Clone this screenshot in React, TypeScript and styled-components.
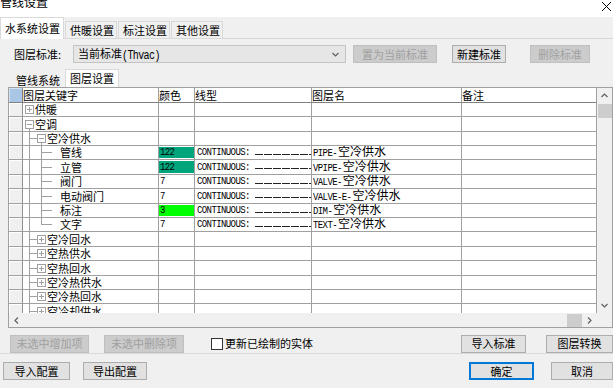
import React from 'react';
import styled, { createGlobalStyle } from 'styled-components';

const cjk = `"Noto Sans CJK SC", "Noto Sans CJK TC", "Liberation Sans", sans-serif`;
const mono = `"Liberation Mono", "DejaVu Sans Mono", monospace`;
const LINE = '#a0a0a0';
const COLS = '14px 136px 36px 117px 150px 135px';

const GlobalStyle = createGlobalStyle`
  html, body { margin: 0; padding: 0; }
  body {
    background: #f0f0f0;
    font-family: ${cjk};
    font-size: 11px;
    line-height: 13px;
    color: #000;
  }
  * { box-sizing: border-box; }
`;

type Kind = 'plus' | 'minus' | 'leaf';

interface TreeRow {
  label: string;
  level: 0 | 1 | 2;
  kind: Kind;
  last?: boolean;
  color?: string;
  swatch?: string;
  layer?: string;
}

const rows: TreeRow[] = [
  { label: '供暖', level: 0, kind: 'plus' },
  { label: '空调', level: 0, kind: 'minus' },
  { label: '空冷供水', level: 1, kind: 'minus' },
  { label: '管线', level: 2, kind: 'leaf', color: '122', swatch: '#00a57c', layer: 'PIPE-' },
  { label: '立管', level: 2, kind: 'leaf', color: '122', swatch: '#00a57c', layer: 'VPIPE-' },
  { label: '阀门', level: 2, kind: 'leaf', color: '7', layer: 'VALVE-' },
  { label: '电动阀门', level: 2, kind: 'leaf', color: '7', layer: 'VALVE-E-' },
  { label: '标注', level: 2, kind: 'leaf', color: '3', swatch: '#00ff00', layer: 'DIM-' },
  { label: '文字', level: 2, kind: 'leaf', last: true, color: '7', layer: 'TEXT-' },
  { label: '空冷回水', level: 1, kind: 'plus' },
  { label: '空热供水', level: 1, kind: 'plus' },
  { label: '空热回水', level: 1, kind: 'plus' },
  { label: '空冷热供水', level: 1, kind: 'plus' },
  { label: '空冷热回水', level: 1, kind: 'plus' },
  { label: '空冷却供水', level: 1, kind: 'plus' },
];

// row lines fall every ~14.4px, so heights alternate 14/15
const rowBottom = (k: number) => Math.round(101.7 + 14.4 * k);
const rowHeight = (k: number) => rowBottom(k + 1) - rowBottom(k);

const Window = styled.div`
  width: 613px;
  height: 388px;
  overflow: hidden;
  background: #f0f0f0;
  display: flex;
  flex-direction: column;
`;

const TitleBar = styled.div`
  height: 17px;
  flex: none;
  background: #fff;
  display: flex;
  justify-content: space-between;
  align-items: flex-start;
  overflow: hidden;
`;

const Title = styled.span`
  font-size: 12px;
  line-height: 14px;
  margin-top: -5px;
`;

const CloseIcon = styled.svg`
  margin: 2px 2px 0 0;
  stroke: #000;
  stroke-width: 1;
`;

const TabStrip = styled.div`
  height: 22px;
  flex: none;
  display: flex;
  align-items: flex-end;
  border-bottom: 1px solid #d9d9d9;
`;

const Tab = styled.div<{ $active?: boolean }>`
  position: relative;
  height: ${p => (p.$active ? 22 : 17)}px;
  margin-bottom: ${p => (p.$active ? -1 : 0)}px;
  margin-right: 1px;
  padding: 0 ${p => (p.$active ? 3 : 2)}px 0 4px;
  display: flex;
  align-items: center;
  background: ${p => (p.$active ? '#fff' : '#f0f0f0')};
  border: 1px solid #d9d9d9;
  border-bottom: none;
  white-space: nowrap;
`;

const Page = styled.div`
  flex: none;
  height: 315px;
  border-bottom: 1px solid #dadada;
  display: flex;
  flex-direction: column;
`;

const StandardRow = styled.div`
  height: 18px;
  margin-top: 6px;
  display: flex;
  align-items: center;
`;

const Label = styled.span`
  margin-left: 14px;
  width: 59px;
  white-space: nowrap;
`;

const Combo = styled.div`
  width: 273px;
  height: 18px;
  border: 1px solid #c4c4c4;
  background: #e6e6e6;
  display: flex;
  align-items: center;
  padding: 0 6px 0 4px;
  white-space: nowrap;
`;

const TextRun = styled.span`
  flex: 1;
  white-space: nowrap;
`;

const LayerName = styled.span`
  display: flex;
  align-items: baseline;
  line-height: 12px;
  white-space: nowrap;
`;

// narrow bitmap-like latin text, stretched upright to match the CAD font
const Mono = styled.span<{ $size?: number; $shift?: number }>`
  display: inline-block;
  font-family: ${mono};
  font-size: ${p => p.$size ?? 9}px;
  letter-spacing: -0.6px;
  padding-right: 1px;
  transform: translateY(${p => p.$shift ?? 0}px) scaleY(1.2);
`;

const Button = styled.button<{ $w: number; $gap?: number; $disabled?: boolean; $default?: boolean }>`
  width: ${p => p.$w}px;
  height: 18px;
  margin-left: ${p => p.$gap ?? 0}px;
  padding: 0;
  flex: none;
  font-family: ${cjk};
  font-size: 11px;
  line-height: 13px;
  color: ${p => (p.$disabled ? '#a0a0a0' : '#000')};
  background: ${p => (p.$disabled ? '#cccccc' : '#e1e1e1')};
  border: 1px solid ${p => (p.$default ? '#0078d7' : p.$disabled ? '#bfbfbf' : '#adadad')};
  box-shadow: ${p => (p.$default ? 'inset 0 0 0 1px #0078d7' : 'none')};
  white-space: nowrap;
`;

const InnerTabs = styled.div`
  height: 24px;
  flex: none;
  display: flex;
  align-items: flex-end;
  padding-left: 12px;
`;

const InnerTab = styled.div<{ $active?: boolean }>`
  height: ${p => (p.$active ? 18 : 14)}px;
  padding: 0 4px 0 ${p => (p.$active ? 4 : 3)}px;
  display: flex;
  align-items: center;
  background: ${p => (p.$active ? '#fff' : '#f0f0f0')};
  border: 1px solid ${p => (p.$active ? '#d9d9d9' : 'transparent')};
  border-bottom: none;
  white-space: nowrap;
`;

const Grid = styled.div`
  margin-left: 8px;
  width: 605px;
  height: 241px;
  flex: none;
  border: 1px solid ${LINE};
  display: grid;
  grid-template-columns: 588px 15px;
  grid-template-rows: 225px 14px;
  background: #fff;
`;

const Viewport = styled.div`
  overflow: hidden;
  background: #fff;
`;

const Row = styled.div<{ $h: number }>`
  display: grid;
  grid-template-columns: ${COLS};
  height: ${p => p.$h}px;
`;

const Cell = styled.div<{ $pad?: number }>`
  border-right: 1px solid ${LINE};
  border-bottom: 1px solid ${LINE};
  display: flex;
  align-items: center;
  padding-left: ${p => p.$pad ?? 0}px;
  overflow: hidden;
  white-space: nowrap;
`;

const HeadCell = styled(Cell)`
  align-items: flex-end;
  border-bottom-color: #808080;
  background: #fff;
`;

const Corner = styled(Cell)`
  background: #a9c6e6;
  border-right-color: #808080;
  border-bottom-color: #808080;
  box-shadow: inset 1px 1px 0 #d4e3f3;
`;

const RowHead = styled(Cell)`
  background: #f0f0f0;
  border-right-color: #909090;
  box-shadow: inset 1px 1px 0 #fff;
`;

const Swatch = styled.div<{ $fill?: string }>`
  flex: 1;
  align-self: stretch;
  margin: 1px 0;
  padding-left: 1px;
  display: flex;
  align-items: center;
  background: ${p => p.$fill ?? 'transparent'};
`;

// linetype preview: a dashed stroke after the name
const DashLine = styled.span`
  flex: none;
  width: 60px;
  height: 1px;
  margin: 3px 0 0 4px;
  background: repeating-linear-gradient(to right, #222 0 8px, transparent 8px 9px);
`;

const LayerCjk = styled.span`
  font-size: 12px;
`;

const TreeSvg = styled.svg`
  display: block;
  flex: none;
  stroke: ${LINE};
  stroke-width: 1;
  shape-rendering: crispEdges;
`;

const VScroll = styled.div`
  background: #f0f0f0;
  display: flex;
  flex-direction: column;
`;

const HScroll = styled.div`
  background: #f0f0f0;
  display: flex;
`;

const ScrollCorner = styled.div`
  background: #f0f0f0;
`;

const ScrollBtn = styled.div`
  width: 15px;
  height: 15px;
  flex: none;
  display: flex;
  align-items: center;
  justify-content: center;
`;

const Track = styled.div<{ $end?: boolean }>`
  flex: 1;
  display: flex;
  justify-content: ${p => (p.$end ? 'flex-end' : 'flex-start')};
`;

const VThumb = styled.div`
  width: 14px;
  height: 14px;
  margin: 1px 0 0 1px;
  background: #cdcdcd;
`;

const HThumb = styled.div`
  width: 15px;
  height: 13px;
  margin-top: 1px;
  background: #cdcdcd;
`;

const Chevron = styled.svg`
  stroke: #606060;
  stroke-width: 1.2;
  fill: none;
`;

const ActionRow = styled.div`
  height: 19px;
  margin-top: 6px;
  display: flex;
  align-items: center;
`;

const Check = styled.label`
  display: flex;
  align-items: center;
  margin-left: 27px;
  white-space: nowrap;
`;

const CheckBox = styled.span`
  width: 12px;
  height: 12px;
  margin-right: 2px;
  border: 1px solid #333;
  background: #fff;
`;

const Footer = styled.div`
  flex: 1;
  display: flex;
  align-items: flex-start;
  padding-top: 8px;
`;

const Spacer = styled.div`
  flex: 1;
`;

const TreeGlyph = ({ row, h }: { row: TreeRow; h: number }) => {
  const w = [12, 24, 37][row.level];
  const m = Math.floor(h / 2) + 0.5;
  const bx = row.level === 0 ? 2 : 14;
  return (
    <TreeSvg width={w} height={h} viewBox={`0 0 ${w} ${h}`}>
      {row.level > 0 && <line x1={6.5} y1={0} x2={6.5} y2={h} />}
      {row.level === 1 && <line x1={6.5} y1={m} x2={bx} y2={m} />}
      {row.level === 2 && <line x1={18.5} y1={0} x2={18.5} y2={row.last ? m : h} />}
      {row.level === 2 && <line x1={18.5} y1={m} x2={29} y2={m} />}
      {row.kind !== 'leaf' && (
        <>
          <rect x={bx + 0.5} y={m - 4} width={8} height={8} fill="#fff" />
          <line x1={bx + 2} y1={m} x2={bx + 7} y2={m} />
          {row.kind === 'plus' && <line x1={bx + 4.5} y1={m - 2.5} x2={bx + 4.5} y2={m + 2.5} />}
          {row.kind === 'minus' && <line x1={bx + 4.5} y1={m + 4} x2={bx + 4.5} y2={h} />}
        </>
      )}
    </TreeSvg>
  );
};

const Up = () => (
  <Chevron width="7" height="5" viewBox="0 0 7 5">
    <polyline points="0.5,4 3.5,1 6.5,4" />
  </Chevron>
);
const Down = () => (
  <Chevron width="7" height="5" viewBox="0 0 7 5">
    <polyline points="0.5,1 3.5,4 6.5,1" />
  </Chevron>
);
const Left = () => (
  <Chevron width="5" height="7" viewBox="0 0 5 7">
    <polyline points="4,0.5 1,3.5 4,6.5" />
  </Chevron>
);
const Right = () => (
  <Chevron width="5" height="7" viewBox="0 0 5 7">
    <polyline points="1,0.5 4,3.5 1,6.5" />
  </Chevron>
);

export default function App() {
  return (
    <>
      <GlobalStyle />
      <Window>
        <TitleBar>
          <Title>管线设置</Title>
          <CloseIcon width="9" height="9" viewBox="0 0 9 9">
            <line x1="0" y1="0" x2="9" y2="9" />
            <line x1="9" y1="0" x2="0" y2="9" />
          </CloseIcon>
        </TitleBar>

        <TabStrip>
          <Tab $active>水系统设置</Tab>
          <Tab>供暖设置</Tab>
          <Tab>标注设置</Tab>
          <Tab>其他设置</Tab>
        </TabStrip>

        <Page>
          <StandardRow>
            <Label>图层标准:</Label>
            <Combo>
              <TextRun>
                当前标准<Mono $size={10}>(Thvac)</Mono>
              </TextRun>
              <Down />
            </Combo>
            <Button $w={84} $gap={7} $disabled>置为当前标准</Button>
            <Button $w={54} $gap={15}>新建标准</Button>
            <Button $w={60} $gap={24} $disabled>删除标准</Button>
          </StandardRow>

          <InnerTabs>
            <InnerTab>管线系统</InnerTab>
            <InnerTab $active>图层设置</InnerTab>
          </InnerTabs>

          <Grid>
            <Viewport>
              <Row $h={15}>
                <Corner />
                <HeadCell>图层关键字</HeadCell>
                <HeadCell>颜色</HeadCell>
                <HeadCell>线型</HeadCell>
                <HeadCell>图层名</HeadCell>
                <HeadCell>备注</HeadCell>
              </Row>
              {rows.map((r, i) => {
                const h = rowHeight(i);
                return (
                  <Row key={r.label} $h={h}>
                    <RowHead />
                    <Cell>
                      <TreeGlyph row={r} h={h - 1} />
                      {r.label}
                    </Cell>
                    <Cell>
                      {r.color && (
                        <Swatch $fill={r.swatch}>
                          <Mono $shift={1}>{r.color}</Mono>
                        </Swatch>
                      )}
                    </Cell>
                    <Cell $pad={2}>
                      {r.layer && (
                        <>
                          <Mono $shift={1}>CONTINUOUS:</Mono>
                          <DashLine />
                        </>
                      )}
                    </Cell>
                    <Cell $pad={1}>
                      {r.layer && (
                        <LayerName>
                          <Mono>{r.layer}</Mono>
                          <LayerCjk>空冷供水</LayerCjk>
                        </LayerName>
                      )}
                    </Cell>
                    <Cell />
                  </Row>
                );
              })}
            </Viewport>
            <VScroll>
              <ScrollBtn>
                <Up />
              </ScrollBtn>
              <Track>
                <VThumb />
              </Track>
              <ScrollBtn>
                <Down />
              </ScrollBtn>
            </VScroll>
            <HScroll>
              <ScrollBtn>
                <Left />
              </ScrollBtn>
              <Track $end>
                <HThumb />
              </Track>
              <ScrollBtn>
                <Right />
              </ScrollBtn>
            </HScroll>
            <ScrollCorner />
          </Grid>

          <ActionRow>
            <Button $w={79} $gap={10} $disabled>未选中增加项</Button>
            <Button $w={80} $gap={15} $disabled>未选中删除项</Button>
            <Check>
              <CheckBox />
              更新已绘制的实体
            </Check>
            <Spacer />
            <Button $w={65}>导入标准</Button>
            <Button $w={67} $gap={20}>图层转换</Button>
          </ActionRow>
        </Page>

        <Footer>
          <Button $w={67} $gap={3}>导入配置</Button>
          <Button $w={64} $gap={13}>导出配置</Button>
          <Spacer />
          <Button $w={65} $default>确定</Button>
          <Button $w={62} $gap={17}>取消</Button>
        </Footer>
      </Window>
    </>
  );
}
